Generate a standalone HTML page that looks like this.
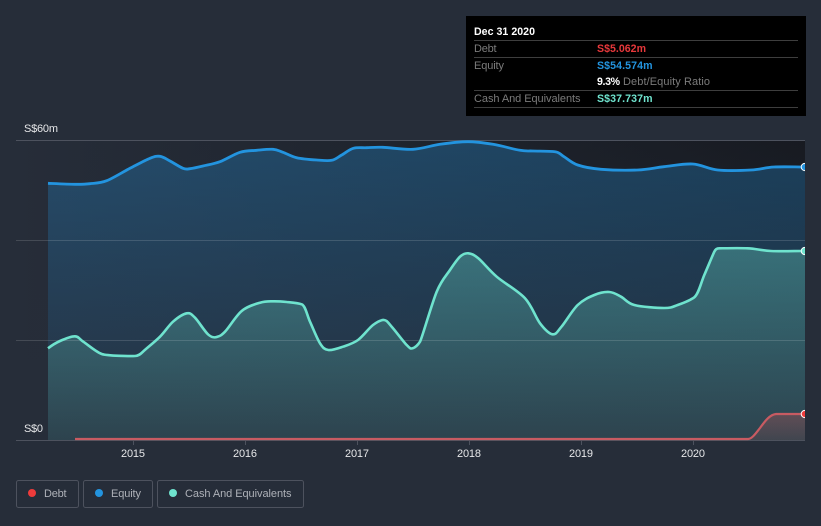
<!DOCTYPE html>
<html><head><meta charset="utf-8"><style>
html,body{margin:0;padding:0;background:#262d39}
svg{display:block}
text{font-family:"Liberation Sans",sans-serif;font-size:11px}
.b{font-weight:700;font-size:10.6px}
</style></head><body>
<svg width="821" height="526" viewBox="0 0 821 526" xmlns="http://www.w3.org/2000/svg">
<defs>
<linearGradient id="bg" x1="0" x2="1" y1="0" y2="0"><stop offset="0" stop-color="#262d39"/><stop offset="1" stop-color="#171a21"/></linearGradient>
<linearGradient id="bgv" gradientUnits="userSpaceOnUse" x1="0" x2="0" y1="140" y2="440"><stop offset="0" stop-color="#262d39" stop-opacity="0"/><stop offset="1" stop-color="#262d39" stop-opacity="1"/></linearGradient>
<linearGradient id="eq" gradientUnits="userSpaceOnUse" x1="0" x2="0" y1="140" y2="440"><stop offset="0" stop-color="#2394df" stop-opacity=".31"/><stop offset="1" stop-color="#2394df" stop-opacity=".04"/></linearGradient>
<linearGradient id="ca" gradientUnits="userSpaceOnUse" x1="0" x2="0" y1="248" y2="440"><stop offset="0" stop-color="#6fe3ce" stop-opacity=".32"/><stop offset="1" stop-color="#6fe3ce" stop-opacity=".1"/></linearGradient>
<linearGradient id="de" gradientUnits="userSpaceOnUse" x1="0" x2="0" y1="414" y2="440"><stop offset="0" stop-color="#ee5a5a" stop-opacity=".26"/><stop offset="1" stop-color="#ee5a5a" stop-opacity=".1"/></linearGradient>
<clipPath id="c"><rect x="16" y="130" width="789" height="311"/></clipPath>
</defs>
<rect width="821" height="526" fill="#262d39"/>
<rect x="16" y="140" width="789" height="300" fill="url(#bg)"/>
<rect x="16" y="140" width="789" height="300" fill="url(#bgv)"/>
<g clip-path="url(#c)">
<path fill="url(#eq)" d="M48 183.3C53 183.5 68 184.2 75 184.3S84.700 184.300 90 183.700S100 183.300 106.700 180.700S122.800 172 130 168.300S145 160.300 150 158.300S156.700 155.900 160 156.300S166.200 159 170 161S179.700 167 183 168.300S186.700 169.100 190 168.700S198 167.200 203 166S213.800 164 220 161.700S233.900 154.200 240 152.300S251.200 150.800 256.700 150.300S268.600 149 273 149.300S279 150.900 283 152.300S291 156.400 296.700 157.700S310.900 159.600 316.700 160S327.500 161.100 331.700 160.300S338 157 341.700 155S349 149.500 353.300 148.300S361.700 147.900 366.700 147.700S375.300 147 383 147.300S403.500 149.800 413 149.300S430.800 145.600 440 144.300S459.200 141.700 468 141.700S484.300 142.900 493 144.300S513.300 149.200 520 150.300S527.200 150.800 533 151S550 151 555 151.700S560.200 154.500 564 156.700S571.500 162.900 577.700 165S591 168.500 601 169.300S627.200 170.400 637.700 170S654.800 167.700 664 166.700S683.700 163.500 692.700 164S708 169 717.700 170S741.600 170.500 751 170S765 167.500 774 167S795 167 805 167V440H48Z"/>
<path fill="url(#ca)" d="M48 348.300C51 346 55.500 343 60 341S71.100 336.200 75 336.300S78.800 338.700 83.300 341.700S96 352 101.700 354S131.500 356.200 135 356S140.500 354.200 143 351.700S155 341.700 160 336.700S168.600 325.600 173 321.700S183 314 186.700 313.300S191.500 314.200 195 317.700S204.400 331.100 208 334.300S213.900 337.900 216.700 337S220.800 336 225 331.700S235.900 315.800 241.700 311S254.800 304.300 260 302.700S268.600 301.400 273 301.300S281.900 301.500 286.700 302S298 303 301.700 304.300S307 315.200 310 321.700S317 338.600 320 343.300S324.500 349.400 328.300 350S338 348.400 343 346.700S353 343.600 358 340S368.700 328.300 373 325S380.900 319.700 384 320S387.900 322.500 391.700 326.700S403.200 341.400 406.700 345S410.500 348.900 412.700 348.300S418 345 420 341.700S431.700 303.700 436.700 291.700S446.100 275.800 450 270S457 259.500 460 256.700S465.300 253 468.300 253.300S473.600 254.400 478.300 258.300S488.900 270 496.700 276.700S517.800 290.500 525 298.300S535.400 317.300 540 323.300S548.900 333.700 552.500 334.300S557.300 331.600 561.500 326.700S572.200 310.300 577.700 305S589 297.200 594.300 295S604.800 291.700 609.300 292S616.800 294.500 621 296.700S627.100 303.100 634.300 305S657.100 308 664.300 308S672.700 306.800 677.700 305S690 300.500 694.300 297.300S701 282.600 704.300 275S712.500 255.500 714.300 251.700C715.500 249.500 716.500 248.300 719.300 248.300S739 247.900 747.700 248.300S761.500 250.500 771 251S795 251 805 251V440H48Z"/>
<path fill="url(#de)" d="M748 439C752 439 756 433 760 428C765 421 770 414.500 776 414L805 414V440H748Z"/>
<g stroke="#fff" stroke-opacity=".14" stroke-width="1">
<line x1="16" x2="805" y1="240.500" y2="240.500"/>
<line x1="16" x2="805" y1="340.500" y2="340.500"/>
</g>
<line x1="16" x2="805" y1="140.500" y2="140.500" stroke="#4d525e"/>
<line x1="16" x2="805" y1="440.500" y2="440.500" stroke="#4d525e"/>
<path fill="none" stroke="#2394df" stroke-width="2.800" d="M48 183.3C53 183.5 68 184.2 75 184.3S84.700 184.300 90 183.700S100 183.300 106.700 180.700S122.800 172 130 168.300S145 160.300 150 158.300S156.700 155.900 160 156.300S166.200 159 170 161S179.700 167 183 168.300S186.700 169.100 190 168.700S198 167.200 203 166S213.800 164 220 161.700S233.900 154.200 240 152.300S251.200 150.800 256.700 150.300S268.600 149 273 149.300S279 150.900 283 152.300S291 156.400 296.700 157.700S310.900 159.600 316.700 160S327.500 161.100 331.700 160.300S338 157 341.700 155S349 149.500 353.300 148.300S361.700 147.900 366.700 147.700S375.300 147 383 147.300S403.500 149.800 413 149.300S430.800 145.600 440 144.300S459.200 141.700 468 141.700S484.300 142.900 493 144.300S513.300 149.200 520 150.300S527.200 150.800 533 151S550 151 555 151.700S560.200 154.500 564 156.700S571.500 162.900 577.700 165S591 168.500 601 169.300S627.200 170.400 637.700 170S654.800 167.700 664 166.700S683.700 163.500 692.700 164S708 169 717.700 170S741.600 170.500 751 170S765 167.500 774 167S795 167 805 167"/>
<path fill="none" stroke="#6fe3ce" stroke-width="2.600" d="M48 348.300C51 346 55.500 343 60 341S71.100 336.200 75 336.300S78.800 338.700 83.300 341.700S96 352 101.700 354S131.500 356.200 135 356S140.500 354.200 143 351.700S155 341.700 160 336.700S168.600 325.600 173 321.700S183 314 186.700 313.300S191.500 314.200 195 317.700S204.400 331.100 208 334.300S213.900 337.900 216.700 337S220.800 336 225 331.700S235.900 315.800 241.700 311S254.800 304.300 260 302.700S268.600 301.400 273 301.300S281.900 301.500 286.700 302S298 303 301.700 304.300S307 315.200 310 321.700S317 338.600 320 343.300S324.500 349.400 328.300 350S338 348.400 343 346.700S353 343.600 358 340S368.700 328.300 373 325S380.900 319.700 384 320S387.900 322.500 391.700 326.700S403.200 341.400 406.700 345S410.500 348.900 412.700 348.300S418 345 420 341.700S431.700 303.700 436.700 291.700S446.100 275.800 450 270S457 259.500 460 256.700S465.300 253 468.300 253.300S473.600 254.400 478.300 258.300S488.900 270 496.700 276.700S517.800 290.500 525 298.300S535.400 317.300 540 323.300S548.900 333.700 552.500 334.300S557.300 331.600 561.500 326.700S572.200 310.300 577.700 305S589 297.200 594.300 295S604.800 291.700 609.300 292S616.800 294.500 621 296.700S627.100 303.100 634.300 305S657.100 308 664.300 308S672.700 306.800 677.700 305S690 300.500 694.300 297.300S701 282.600 704.300 275S712.500 255.500 714.300 251.700C715.500 249.500 716.500 248.300 719.300 248.300S739 247.900 747.700 248.300S761.500 250.500 771 251S795 251 805 251"/>
<path fill="none" stroke="#c85b62" stroke-width="2.200" d="M75 439L748 439C752 439 756 433 760 428C765 421 770 414.500 776 414L805 414"/>
<circle cx="804.800" cy="167" r="3.600" fill="#2394df" stroke="#fff" stroke-width="1"/>
<circle cx="804.800" cy="251" r="3.600" fill="#6fe3ce" stroke="#fff" stroke-width="1"/>
<circle cx="804.800" cy="414" r="3.600" fill="#ee3b3b" stroke="#fff" stroke-width="1"/>
</g>
<g stroke="#4d525e">
<line x1="133.500" x2="133.500" y1="441" y2="445"/><line x1="245.500" x2="245.500" y1="441" y2="445"/><line x1="357.500" x2="357.500" y1="441" y2="445"/><line x1="469.500" x2="469.500" y1="441" y2="445"/><line x1="581.500" x2="581.500" y1="441" y2="445"/><line x1="693.500" x2="693.500" y1="441" y2="445"/>
</g>
<g fill="#e6e7e9">
<text x="24" y="132" textLength="34">S$60m</text>
<text x="24" y="432" textLength="19">S$0</text>
<text x="121" y="457" textLength="24">2015</text>
<text x="233" y="457" textLength="24">2016</text>
<text x="345" y="457" textLength="24">2017</text>
<text x="457" y="457" textLength="24">2018</text>
<text x="569" y="457" textLength="24">2019</text>
<text x="681" y="457" textLength="24">2020</text>
</g>
<rect x="466" y="16" width="340" height="100" fill="#000"/>
<g stroke="#3e3e3e"><line x1="474" x2="798" y1="40.500" y2="40.500"/><line x1="474" x2="798" y1="57.500" y2="57.500"/><line x1="474" x2="798" y1="90.500" y2="90.500"/><line x1="474" x2="798" y1="107.500" y2="107.500"/></g>
<text x="474" y="35" fill="#fff" class="b" textLength="61">Dec 31 2020</text>
<text x="474" y="52" fill="#7b7b7b" textLength="22.500">Debt</text>
<text x="597" y="52" fill="#e8383b" class="b" textLength="49">S$5.062m</text>
<text x="474" y="69" fill="#7b7b7b" textLength="30">Equity</text>
<text x="597" y="69" fill="#2394df" class="b" textLength="55.500">S$54.574m</text>
<text x="597" y="85" fill="#fff" class="b" textLength="23">9.3%</text>
<text x="623" y="85" fill="#7b7b7b" textLength="87">Debt/Equity Ratio</text>
<text x="474" y="102" fill="#7b7b7b" textLength="106.500">Cash And Equivalents</text>
<text x="597" y="102" fill="#6fe3ce" class="b" textLength="55.500">S$37.737m</text>
<g fill="none" stroke="#4d525e"><rect x="16.500" y="480.500" width="62" height="27" rx="2"/><rect x="83.500" y="480.500" width="69" height="27" rx="2"/><rect x="157.500" y="480.500" width="146" height="27" rx="2"/></g>
<circle cx="32" cy="493" r="4" fill="#ee3b3b"/><circle cx="99" cy="493" r="4" fill="#2394df"/><circle cx="173" cy="493" r="4" fill="#6fe3ce"/>
<g fill="#aeb1b8">
<text x="44" y="497" textLength="22.500">Debt</text>
<text x="111" y="497" textLength="30">Equity</text>
<text x="185" y="497" textLength="106.500">Cash And Equivalents</text>
</g>
</svg>
</body></html>
